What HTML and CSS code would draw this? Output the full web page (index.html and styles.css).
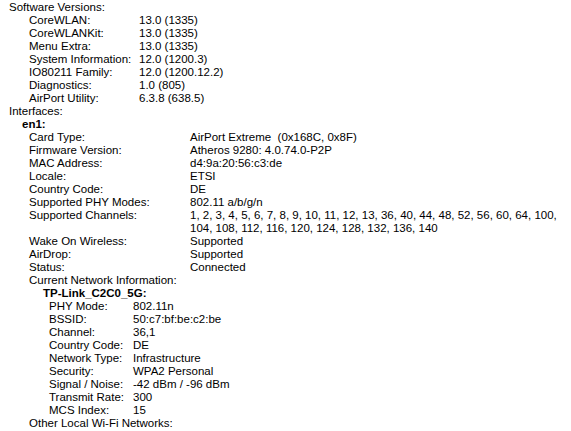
FILE: index.html
```html
<!DOCTYPE html>
<html lang="en">
    <head>
        <meta charset="UTF-8">
        <meta name="viewport" content="width=device-width, initial-scale=1.0">
        <title>Wi-Fi Info</title>
        <link rel="stylesheet" href="styles.css">
    </head>
    <body>
        <div class="report">
            <div class="head">Software Versions:</div>
            <dl class="props soft">
                <dt>CoreWLAN:</dt><dd>13.0 (1335)</dd>
                <dt>CoreWLANKit:</dt><dd>13.0 (1335)</dd>
                <dt>Menu Extra:</dt><dd>13.0 (1335)</dd>
                <dt>System Information:</dt><dd>12.0 (1200.3)</dd>
                <dt>IO80211 Family:</dt><dd>12.0 (1200.12.2)</dd>
                <dt>Diagnostics:</dt><dd>1.0 (805)</dd>
                <dt>AirPort Utility:</dt><dd>6.3.8 (638.5)</dd>
            </dl>
            <div class="head">Interfaces:</div>
            <div class="iface">
                <div class="name">en1:</div>
                <dl class="props card">
                    <dt>Card Type:</dt><dd>AirPort Extreme  (0x168C, 0x8F)</dd>
                    <dt>Firmware Version:</dt><dd>Atheros 9280: 4.0.74.0-P2P</dd>
                    <dt>MAC Address:</dt><dd>d4:9a:20:56:c3:de</dd>
                    <dt>Locale:</dt><dd>ETSI</dd>
                    <dt>Country Code:</dt><dd>DE</dd>
                    <dt>Supported PHY Modes:</dt><dd>802.11 a/b/g/n</dd>
                    <dt>Supported Channels:</dt><dd class="wrap">1, 2, 3, 4, 5, 6, 7, 8, 9, 10, 11, 12, 13, 36, 40, 44, 48, 52, 56, 60, 64, 100,<br>104, 108, 112, 116, 120, 124, 128, 132, 136, 140</dd>
                    <dt>Wake On Wireless:</dt><dd>Supported</dd>
                    <dt>AirDrop:</dt><dd>Supported</dd>
                    <dt>Status:</dt><dd>Connected</dd>
                </dl>
                <div class="sub">Current Network Information:</div>
                <div class="net">
                    <div class="name">TP-Link_C2C0_5G:</div>
                    <dl class="props current">
                        <dt>PHY Mode:</dt><dd>802.11n</dd>
                        <dt>BSSID:</dt><dd>50:c7:bf:be:c2:be</dd>
                        <dt>Channel:</dt><dd>36,1</dd>
                        <dt>Country Code:</dt><dd>DE</dd>
                        <dt>Network Type:</dt><dd>Infrastructure</dd>
                        <dt>Security:</dt><dd>WPA2 Personal</dd>
                        <dt>Signal / Noise:</dt><dd>-42 dBm / -96 dBm</dd>
                        <dt>Transmit Rate:</dt><dd>300</dd>
                        <dt>MCS Index:</dt><dd>15</dd>
                    </dl>
                </div>
                <div class="sub">Other Local Wi-Fi Networks:</div>
            </div>
        </div>
    </body>
</html>
```

FILE: styles.css
```css
body{
    margin: 0;
    background-color: #fff;
    color: #000;
    font-family: "Liberation Sans", Arial, sans-serif;
    font-size: 11.5px;
    line-height: 13px;
}

.report{
    padding: 1px 0 0 9px;
}

.props{
    display: grid;
    margin: 0;
    padding-left: 20px;
}

.props dt,
.props dd{
    margin: 0;
    white-space: pre;
}

.props.soft{
    grid-template-columns: 110px auto;
}

.iface{
    padding-left: 13px;
}

.iface .name{
    font-weight: bold;
}

.props.card{
    padding-left: 7px;
    grid-template-columns: 161px auto;
}

.sub{
    padding-left: 7px;
}

.net{
    padding-left: 21px;
}

.props.current{
    padding-left: 6px;
    grid-template-columns: 84px auto;
}
```
